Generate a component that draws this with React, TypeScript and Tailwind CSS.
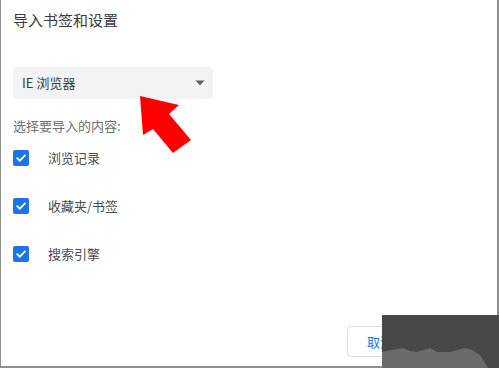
import React from "react";

// Import bookmarks dialog with a red pointer arrow and a dark image overlay in the corner
const ITEMS = ["浏览记录", "收藏夹/书签", "搜索引擎"];

function CheckBox() {
  return (
    <span className="flex h-4 w-4 items-center justify-center rounded-[2px] bg-[#1a73e8]">
      <svg width="12" height="12" viewBox="0 0 12 12" fill="none">
        <path d="M2.3 6.2 L4.9 8.7 L9.8 3.6" stroke="#fff" strokeWidth="1.8" strokeLinecap="square" />
      </svg>
    </span>
  );
}

export default function App() {
  return (
    <div
      className="relative h-[368px] w-[499px] overflow-hidden bg-white"
      style={{ fontFamily: '"Noto Sans CJK SC", "Noto Sans", sans-serif' }}
    >
      <div className="flex h-full w-[499px] flex-col border-b-2 border-l border-r-2 border-[#8e8e8e] pl-3">
        {/* Title */}
        <div className="pt-[9px] text-[15px] leading-[22px] text-[#3a3a3a]">导入书签和设置</div>

        {/* Browser select */}
        <div className="mt-[36px] flex h-8 w-[200px] items-center justify-between rounded-[4px] bg-[#f1f3f4] pl-[9px] pr-[8px]">
          <span className="text-[13px] leading-[20px] text-[#3a3a3a]">IE 浏览器</span>
          <svg width="10" height="6" viewBox="0 0 10 6">
            <path d="M0.5 0.5 H9.5 L5 5.5 Z" fill="#5f6368" />
          </svg>
        </div>

        <div className="mt-[17px] text-[13px] leading-[20px] text-[#6b6e72]">选择要导入的内容:</div>

        {/* Options */}
        <div className="mt-[6px] flex flex-col gap-4">
          {ITEMS.map((label) => (
            <div key={label} className="flex h-8 items-center">
              <CheckBox />
              <span className="ml-[19px] text-[13px] leading-[20px] text-[#4a4c50]">{label}</span>
            </div>
          ))}
        </div>

        {/* Footer buttons */}
        <div className="mt-auto flex justify-end gap-2 pb-[9px] pr-[14px]">
          <button className="flex h-[31px] w-[66px] items-center justify-center rounded-[4px] border border-[#dadce0] bg-white text-[13px] text-[#1a73e8]">
            取消
          </button>
          <button className="flex h-[31px] w-[62px] items-center justify-center rounded-[4px] bg-[#1a73e8] text-[13px] text-white">
            导入
          </button>
        </div>
      </div>

      {/* Red pointer arrow */}
      <svg className="pointer-events-none absolute left-[138px] top-[94px]" width="56" height="62" viewBox="0 0 56 62">
        <polygon points="2,2 41,11 31,20 53,46 35,59 15,35 5,41" fill="#ff0000" />
      </svg>

      {/* Dark picture overlay at bottom right */}
      <svg className="pointer-events-none absolute left-[382px] top-[315px]" width="117" height="53" viewBox="0 0 117 53">
        <rect width="117" height="53" fill="#474948" />
        <polygon
          points="0,37 10,35 21,33 28,36 35,37 48,33 55,37 68,37 76,35 83,33 90,35 98,40 106,53 0,53"
          fill="#6b6b6b"
        />
      </svg>
    </div>
  );
}
